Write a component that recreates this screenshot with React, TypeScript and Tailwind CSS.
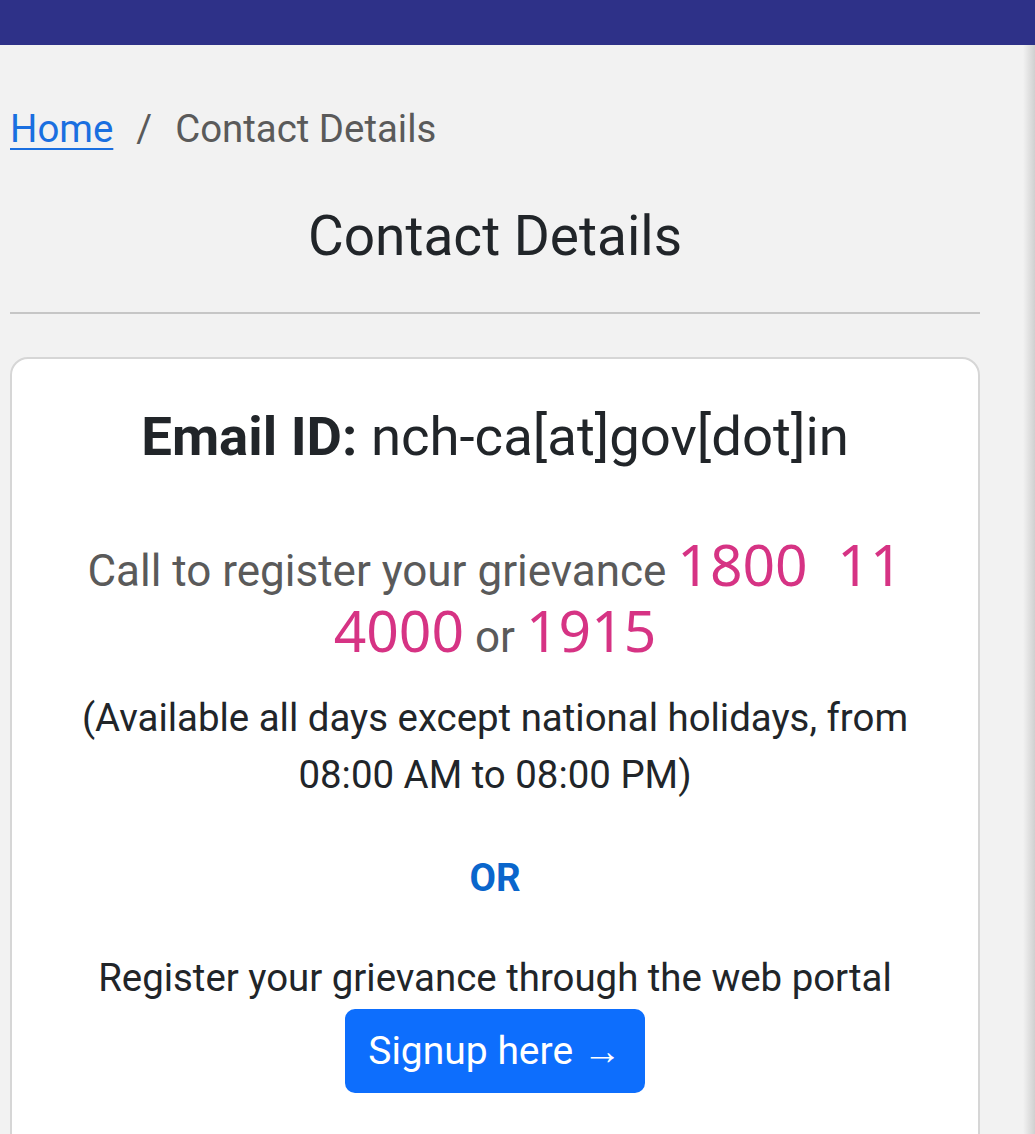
import React from "react"

export default function App() {
  return (
    <div className="w-[1035px] h-[1134px] overflow-hidden bg-[#f2f2f2] flex flex-col font-['Roboto',sans-serif]">
      <div className="h-[45px] w-full bg-[#2e3188] shrink-0" />
      <div className="flex flex-1">
        <main className="flex-1 pl-[10px] pr-[43px]">
          <nav className="pt-[56px] flex items-center text-[38.4px] leading-[56px] text-[#5a5a5a]">
            <a href="#" className="text-[#1a6fe0] underline underline-offset-[6px] decoration-2">Home</a>
            <span className="px-[23px]">/</span>
            <span>Contact Details</span>
          </nav>
          <h1 className="mt-[47px] text-center text-[55px] leading-[64px] text-[#212529]">Contact Details</h1>
          <hr className="mt-[44px] border-t-2 border-[#c6c6c6]" />
          <section className="mt-[43px] bg-white border-2 border-[#d6d6d6] rounded-[18px] px-[60px] pt-[45px] pb-[60px] text-center">
            <p className="text-[54.5px] leading-[64px] text-[#212529]">
              <b className="font-bold">Email ID:</b> nch-ca[at]gov[dot]in
            </p>
            <p className="mt-[70px] text-[44px] leading-[66px] text-[#5a5a5a]">
              Call to register your grievance{" "}
              <span className="font-['Noto_Sans',sans-serif] text-[57px] leading-[40px] text-[#d63384]">1800&nbsp;&nbsp;11 4000</span>
              {" "}or{" "}
              <span className="font-['Noto_Sans',sans-serif] text-[57px] leading-[40px] text-[#d63384]">1915</span>
            </p>
            <p className="mt-[19px] text-[38.4px] leading-[57px] text-[#212529]">
              (Available all days except national holidays, from 08:00 AM to 08:00 PM)
            </p>
            <p className="mt-[46px] text-[38.4px] leading-[58px] font-bold text-[#0a66cc]">OR</p>
            <p className="mt-[42px] text-[38.4px] leading-[58px] text-[#212529]">Register your grievance through the web portal</p>
            <button className="mt-[2px] bg-[#0d6efd] text-white text-[39px] leading-[50px] px-[23px] py-[17px] rounded-[10px]">
              Signup here →
            </button>
          </section>
        </main>
        <div className="w-[12px] bg-gradient-to-r from-[#f2f2f2] to-[#d0d0d0]" />
      </div>
    </div>
  )
}
